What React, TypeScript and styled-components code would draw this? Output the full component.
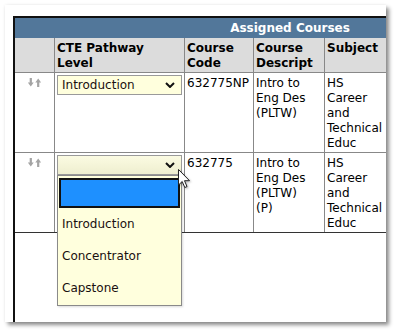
import React from "react";
import styled, { createGlobalStyle } from "styled-components";

const Global = createGlobalStyle`
  * { box-sizing: border-box; }
  html, body { margin: 0; padding: 0; background: #ffffff; }
  body { font-family: "DejaVu Sans", Verdana, sans-serif; font-size: 12px; line-height: 15px; color: #000; }
`;

const Page = styled.div`
  width: 395px;
  height: 331px;
  padding: 5px;
  background: #fff;
  overflow: hidden;
`;

const Frame = styled.div`
  width: 381px;
  height: 317px;
  background: #fff;
  overflow: hidden;
  padding: 11px 0 0 8px;
  box-shadow: 3px 3px 4px rgba(0, 0, 0, 0.45), 0 0 3px rgba(0, 0, 0, 0.08);
`;

const Wrapper = styled.div`
  width: 560px;
  height: 400px;
  border-top: 2px solid #111;
  border-left: 2px solid #111;
`;

const TitleBar = styled.div`
  height: 20px;
  background: #52779a;
  color: #fff;
  font-weight: bold;
  text-align: center;
  line-height: 19px;
  padding: 1px 8px 0 0;
`;

const Row = styled.div<{ $last?: boolean }>`
  display: grid;
  grid-template-columns: 40px 130px 69px 71px 64px 1fr;
  border-bottom: 1px solid ${(p) => (p.$last ? "#333" : "#888")};
`;

const HeadCell = styled.div`
  background: #dcdcdc;
  font-weight: bold;
  padding: 3px 2px 1px 2px;
  border-right: 1px solid #888;
  color: #000;
`;

const Cell = styled.div<{ $center?: boolean }>`
  padding: 3px 2px 1px 2px;
  border-right: 1px solid #888;
  min-height: 79px;
  text-align: ${(p) => (p.$center ? "center" : "left")};
  position: relative;
`;

const Line = styled.span`
  display: block;
  white-space: nowrap;
`;

const SortIcon = styled.svg`
  display: inline-block;
  margin-top: 2px;
`;

const SelectBox = styled.div<{ $open?: boolean }>`
  position: relative;
  width: 125px;
  height: 20px;
  margin-top: -1px;
  border: 1px solid #9a9a9a;
  background: ${(p) =>
    p.$open ? "linear-gradient(#fbfbe2, #eeeecf)" : "#ffffdd"};
  display: flex;
  align-items: center;
  justify-content: space-between;
  padding: 0 6px 0 4px;
  color: #1a1010;
`;

const Chevron = styled.svg`
  display: block;
`;

const DropList = styled.div`
  position: absolute;
  top: 19px;
  left: -1px;
  width: 125px;
  background: #ffffdd;
  border: 1px solid #8a8a8a;
  padding: 2px 0 1px;
  z-index: 5;
  box-shadow: 1px 1px 2px rgba(0, 0, 0, 0.15);
`;

const Option = styled.div<{ $active?: boolean }>`
  height: ${(p) => (p.$active ? "30px" : "32px")};
  margin: ${(p) => (p.$active ? "0 1px 0 1px" : "0")};
  background: ${(p) => (p.$active ? "#1e90ff" : "transparent")};
  border: ${(p) => (p.$active ? "2px solid #111" : "none")};
  display: flex;
  align-items: center;
  padding-left: 4px;
  color: #1a1010;
`;

const Cursor = styled.svg`
  position: absolute;
  left: 120px;
  top: 13px;
  z-index: 6;
  filter: drop-shadow(1px 1px 1px rgba(0, 0, 0, 0.3));
`;

const Sort = () => (
  <SortIcon width="14" height="9" viewBox="0 0 14 9">
    <path d="M1.7 0 H3.9 V4.6 H5.7 L2.8 8.6 L-0.1 4.6 H1.7 Z" fill="#a4a4a4" />
    <path d="M9.1 9 H11.3 V4.4 H13.1 L10.2 0.4 L7.3 4.4 H9.1 Z" fill="#a4a4a4" />
  </SortIcon>
);

const ChevronIcon = () => (
  <Chevron width="10" height="6" viewBox="0 0 10 6">
    <path d="M1 1 L5 5 L9 1" fill="none" stroke="#111" strokeWidth="2" />
  </Chevron>
);

const Select = ({ value, open }: { value: string; open?: boolean }) => (
  <SelectBox $open={open}>
    <span>{value}</span>
    <ChevronIcon />
    {open && (
      <>
        <DropList>
          <Option $active />
          <Option>Introduction</Option>
          <Option>Concentrator</Option>
          <Option>Capstone</Option>
        </DropList>
        <Cursor width="13" height="20" viewBox="0 0 13 20">
          <path
            d="M0.5 0.5 L0.5 16 L4.2 12.5 L6.8 18.5 L9 17.6 L6.5 11.7 L11.5 11.7 Z"
            fill="#fff"
            stroke="#222"
            strokeWidth="1"
            strokeLinejoin="round"
          />
        </Cursor>
      </>
    )}
  </SelectBox>
);

type Course = {
  level: string;
  open?: boolean;
  code: string;
  desc: string[];
  subject: string[];
};

const courses: Course[] = [
  {
    level: "Introduction",
    code: "632775NP",
    desc: ["Intro to", "Eng Des", "(PLTW)"],
    subject: ["HS", "Career", "and", "Technical", "Educ"],
  },
  {
    level: "",
    open: true,
    code: "632775",
    desc: ["Intro to", "Eng Des", "(PLTW)", "(P)"],
    subject: ["HS", "Career", "and", "Technical", "Educ"],
  },
];

export default function App() {
  return (
    <>
      <Global />
      <Page>
        <Frame>
          <Wrapper>
            <TitleBar>Assigned Courses</TitleBar>
            <Row>
              <HeadCell />
              <HeadCell>
                <Line>CTE Pathway</Line>
                <Line>Level</Line>
              </HeadCell>
              <HeadCell>
                <Line>Course</Line>
                <Line>Code</Line>
              </HeadCell>
              <HeadCell>
                <Line>Course</Line>
                <Line>Descript</Line>
              </HeadCell>
              <HeadCell>
                <Line>Subject</Line>
              </HeadCell>
              <HeadCell />
            </Row>
            {courses.map((c, i) => (
              <Row key={i} $last={i === courses.length - 1}>
                <Cell $center>
                  <Sort />
                </Cell>
                <Cell>
                  <Select value={c.level} open={c.open} />
                </Cell>
                <Cell>
                  <Line>{c.code}</Line>
                </Cell>
                <Cell>
                  {c.desc.map((d) => (
                    <Line key={d}>{d}</Line>
                  ))}
                </Cell>
                <Cell>
                  {c.subject.map((s) => (
                    <Line key={s}>{s}</Line>
                  ))}
                </Cell>
                <Cell />
              </Row>
            ))}
          </Wrapper>
        </Frame>
      </Page>
    </>
  );
}
